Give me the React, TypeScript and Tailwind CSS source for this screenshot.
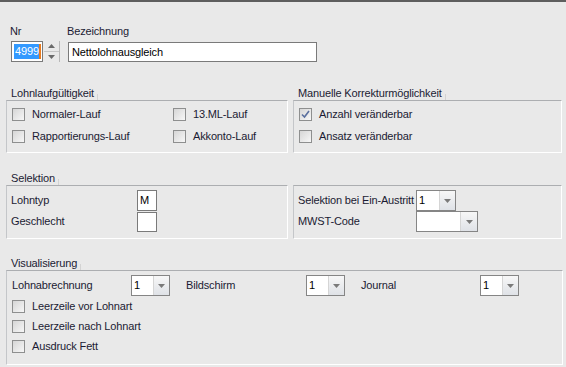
import React from "react"

const font = { fontFamily: '"Liberation Sans", Arial, sans-serif' }

function GroupTitle({ title }: { title?: string }) {
    return (
        <div className="h-[14px] flex items-end pl-[5px]">
            {title && (
                <>
                    <span className="leading-[14px] pr-[3px]">{title}</span>
                    <div className="w-px h-[6px] bg-[#d3d3d3]" />
                </>
            )}
        </div>
    )
}

function GroupBox({ title, className, children }: { title?: string; className?: string; children: React.ReactNode }) {
    return (
        <div className={className}>
            <GroupTitle title={title} />
            <div className="border-t border-l border-t-[#acaeb1] border-l-[#c4c6c9] border-r border-b border-r-white border-b-white">
                {children}
            </div>
        </div>
    )
}

function CheckBox({ label, checked = false }: { label: string; checked?: boolean }) {
    return (
        <div className="flex items-center gap-[7px] whitespace-nowrap">
            <div className="w-[13px] h-[13px] border border-[#8e8f8f] bg-gradient-to-br from-[#d6d6d6] to-[#f7f7f7] flex items-center justify-center">
                {checked && (
                    <svg width="9" height="9" viewBox="0 0 9 9">
                        <path d="M1 4.5 L3.5 7 L8 1" fill="none" stroke="#5a6f9e" strokeWidth="1.6" />
                    </svg>
                )}
            </div>
            <span>{label}</span>
        </div>
    )
}

function Combo({ value = "", width, textWidth }: { value?: string; width: string; textWidth: string }) {
    return (
        <div className={`${width} h-[21px] flex border border-[#858585] bg-white`}>
            <div className={`${textWidth} h-full flex items-center pl-[2px] text-black`}>{value}</div>
            <div className="flex-1 h-full border-l border-[#d5d5d5] bg-gradient-to-b from-[#f7f7f7] to-[#dfe2e7] flex items-center justify-center">
                <svg width="7" height="4" viewBox="0 0 7 4">
                    <path d="M0 0 H7 L3.5 4 Z" fill="#7a7a7a" />
                </svg>
            </div>
        </div>
    )
}

export default function App() {
    return (
        <div style={font} className="w-[566px] h-[367px] bg-[#e9e9e9] text-[11px] tracking-[-0.15px] text-[#1b1b33] overflow-hidden whitespace-nowrap">
            <div className="h-[2px] bg-[#5e5e5e]" />

            {/* Kopf */}
            <div className="mt-[23px] flex h-[13px] leading-[13px]">
                <span className="ml-[10px] w-[57px]">Nr</span>
                <span>Bezeichnung</span>
            </div>
            <div className="mt-[3px] flex items-start">
                <div className="ml-[11px] w-[32px] h-[21px] border border-[#7a7a7a] bg-white flex items-center pl-[2px]">
                    <span className="bg-[#3399ff] text-white leading-[15px] pl-px">4999</span>
                    <span className="w-[2px] h-[15px] bg-[#e87b1e]" />
                </div>
                <div className="ml-px w-[16px] h-[21px] border-r border-[#b9b9b9] flex flex-col">
                    <div className="flex-1 flex items-center justify-center border-b border-[#c6c6c6]">
                        <svg width="7" height="4" viewBox="0 0 7 4"><path d="M0 4 H7 L3.5 0 Z" fill="#6a6a6a" /></svg>
                    </div>
                    <div className="flex-1 flex items-center justify-center">
                        <svg width="7" height="4" viewBox="0 0 7 4"><path d="M0 0 H7 L3.5 4 Z" fill="#6a6a6a" /></svg>
                    </div>
                </div>
                <div className="ml-[8px] mt-px w-[249px] h-[20px] border border-[#7a7a7a] bg-white flex items-center pl-[3px] text-black">
                    Nettolohnausgleich
                </div>
            </div>

            {/* Lohnlauf / Korrektur */}
            <div className="mt-[24px] flex gap-[5px] pl-[6px]">
                <GroupBox title="Lohnlaufgültigkeit" className="w-[282px]">
                    <div className="h-[51px] pt-[2px] pl-[5px] grid grid-cols-[161px_1fr] auto-rows-[22px] items-center">
                        <CheckBox label="Normaler-Lauf" />
                        <CheckBox label="13.ML-Lauf" />
                        <CheckBox label="Rapportierungs-Lauf" />
                        <CheckBox label="Akkonto-Lauf" />
                    </div>
                </GroupBox>
                <GroupBox title="Manuelle Korrekturmöglichkeit" className="w-[269px]">
                    <div className="h-[51px] pt-[2px] pl-[5px] flex flex-col">
                        <div className="h-[22px] flex items-center"><CheckBox label="Anzahl veränderbar" checked /></div>
                        <div className="h-[22px] flex items-center"><CheckBox label="Ansatz veränderbar" /></div>
                    </div>
                </GroupBox>
            </div>

            {/* Selektion */}
            <div className="mt-[18px] flex gap-[5px] pl-[6px]">
                <GroupBox title="Selektion" className="w-[282px]">
                    <div className="h-[52px] pt-[4px] pl-[4px] grid grid-cols-[126px_1fr] auto-rows-[21px] items-center">
                        <span>Lohntyp</span>
                        <div className="w-[20px] h-[21px] border border-[#7a7a7a] bg-white flex items-center pl-[2px] text-black">M</div>
                        <span>Geschlecht</span>
                        <div className="w-[20px] h-[20px] border border-[#7a7a7a] bg-white" />
                    </div>
                </GroupBox>
                <GroupBox className="w-[269px]">
                    <div className="h-[52px] pt-[4px] pl-[4px] grid grid-cols-[118px_1fr] auto-rows-[21px] items-center">
                        <span>Selektion bei Ein-Austritt</span>
                        <Combo value="1" width="w-[40px]" textWidth="w-[22px]" />
                        <span>MWST-Code</span>
                        <Combo width="w-[62px]" textWidth="w-[43px]" />
                    </div>
                </GroupBox>
            </div>

            {/* Visualisierung */}
            <div className="mt-[17px] pl-[6px]">
                <GroupBox title="Visualisierung" className="w-[557px]">
                    <div className="h-[93px] pt-[4px] pl-[5px] flex flex-col">
                        <div className="h-[21px] flex items-center">
                            <span className="w-[119px]">Lohnabrechnung</span>
                            <Combo value="1" width="w-[39px]" textWidth="w-[21px]" />
                            <span className="ml-[16px] w-[120px]">Bildschirm</span>
                            <Combo value="1" width="w-[39px]" textWidth="w-[21px]" />
                            <span className="ml-[16px] w-[119px]">Journal</span>
                            <Combo value="1" width="w-[39px]" textWidth="w-[21px]" />
                        </div>
                        <div className="h-[20px] flex items-center"><CheckBox label="Leerzeile vor Lohnart" /></div>
                        <div className="h-[20px] flex items-center"><CheckBox label="Leerzeile nach Lohnart" /></div>
                        <div className="h-[20px] flex items-center"><CheckBox label="Ausdruck Fett" /></div>
                    </div>
                </GroupBox>
            </div>
        </div>
    )
}
